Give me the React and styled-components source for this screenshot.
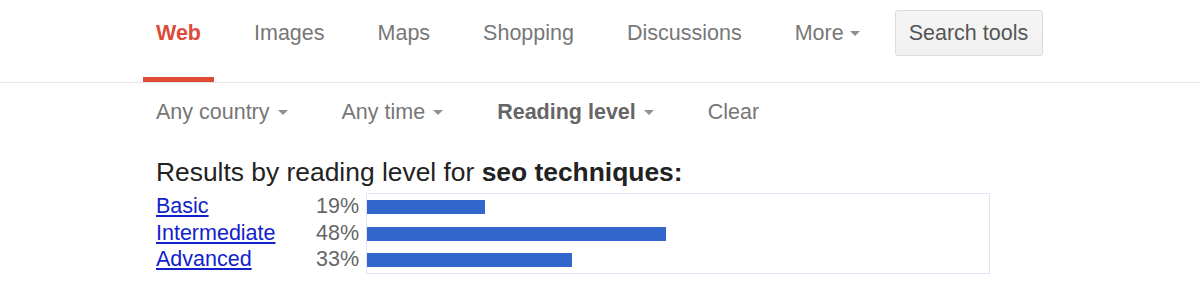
import React from "react";
import styled, { createGlobalStyle } from "styled-components";

const Global = createGlobalStyle`
  html, body { margin: 0; padding: 0; background: #fff; }
  body { font-family: "Liberation Sans", Arial, Helvetica, sans-serif; }
`;

const Header = styled.div`
  display: flex;
  align-items: flex-start;
  height: 82px;
  padding-left: 143px;
  border-bottom: 1px solid #e5e5e5;
`;

const Tab = styled.div`
  box-sizing: border-box;
  height: 82px;
  padding: 20px 13px 0;
  margin-right: 27px;
  font-size: 21.5px;
  line-height: 27px;
  display: flex;
  align-items: flex-start;
  color: ${(p) => (p.$active ? "#dd4b39" : "#777")};
  font-weight: ${(p) => (p.$active ? "bold" : "normal")};
  border-bottom: 5px solid ${(p) => (p.$active ? "#dd4b39" : "transparent")};
  white-space: nowrap;
`;

const Arrow = styled.span`
  display: inline-block;
  width: 0;
  height: 0;
  margin-left: ${(p) => p.$gap || 6}px;
  margin-top: 11px;
  border-left: 5.5px solid transparent;
  border-right: 5.5px solid transparent;
  border-top: 5.5px solid #909090;
`;

const ToolsButton = styled.div`
  box-sizing: border-box;
  margin-top: 10px;
  margin-left: -5px;
  height: 46px;
  padding: 9px 14px 0 13px;
  font-size: 21.5px;
  line-height: 27px;
  color: #555;
  background: linear-gradient(#f5f5f5, #f1f1f1);
  border: 1px solid #dcdcdc;
  border-radius: 3px;
  white-space: nowrap;
`;

const Filters = styled.div`
  display: flex;
  padding: 15.5px 0 0 156px;
  height: 60.5px;
  box-sizing: border-box;
`;

const Filter = styled.div`
  display: flex;
  align-items: flex-start;
  margin-right: 54px;
  font-size: 21.5px;
  line-height: 27px;
  color: ${(p) => (p.$bold ? "#666" : "#777")};
  font-weight: ${(p) => (p.$bold ? "bold" : "normal")};
  white-space: nowrap;
`;

const Results = styled.div`
  padding-left: 156px;
`;

const Heading = styled.div`
  font-size: 26.4px;
  line-height: 30px;
  color: #222;
  margin-top: 13.5px;
  margin-bottom: 6px;
  b { font-weight: bold; }
`;

const Chart = styled.div`
  display: flex;
  align-items: flex-start;
`;

const Column = styled.div`
  display: flex;
  flex-direction: column;
  width: ${(p) => p.$w}px;
  margin-top: ${(p) => p.$top || 0}px;
  text-align: ${(p) => p.$align || "left"};
`;

const Cell = styled.div`
  height: 26.5px;
  line-height: 26.5px;
  font-size: 21.5px;
  white-space: nowrap;
`;

const Label = styled.a`
  color: #1122cc;
  text-decoration: underline;
  cursor: pointer;
`;

const Pct = styled.span`
  color: #666;
`;

const BarBox = styled.div`
  box-sizing: border-box;
  margin-left: 7px;
  width: 624px;
  height: 81px;
  padding-top: 6px;
  border: 1px solid #dfe5f5;
  display: flex;
  flex-direction: column;
  gap: 12.5px;
`;

const Bar = styled.div`
  height: 14px;
  background: #3366cc;
`;

const tabs = ["Images", "Maps", "Shopping", "Discussions"];
const filters = [
  { label: "Any country", menu: true },
  { label: "Any time", menu: true },
  { label: "Reading level", menu: true, bold: true },
  { label: "Clear" },
];
const rows = [
  { label: "Basic", pct: 19 },
  { label: "Intermediate", pct: 48 },
  { label: "Advanced", pct: 33 },
];

export default function App() {
  return (
    <>
      <Global />
      <Header>
        <Tab $active>Web</Tab>
        {tabs.map((t) => (
          <Tab key={t}>{t}</Tab>
        ))}
        <Tab>
          More
          <Arrow />
        </Tab>
        <ToolsButton>Search tools</ToolsButton>
      </Header>
      <Filters>
        {filters.map((f) => (
          <Filter key={f.label} $bold={f.bold}>
            {f.label}
            {f.menu && <Arrow $gap={8} />}
          </Filter>
        ))}
      </Filters>
      <Results>
        <Heading>
          Results by reading level for <b>seo techniques:</b>
        </Heading>
        <Chart>
          <Column $w={146} $top={0}>
            {rows.map((r) => (
              <Cell key={r.label}>
                <Label>{r.label}</Label>
              </Cell>
            ))}
          </Column>
          <Column $w={57} $top={0} $align="right">
            {rows.map((r) => (
              <Cell key={r.label}>
                <Pct>{r.pct}%</Pct>
              </Cell>
            ))}
          </Column>
          <BarBox>
            {rows.map((r) => (
              <Bar key={r.label} style={{ width: `${r.pct}%` }} />
            ))}
          </BarBox>
        </Chart>
      </Results>
    </>
  );
}
